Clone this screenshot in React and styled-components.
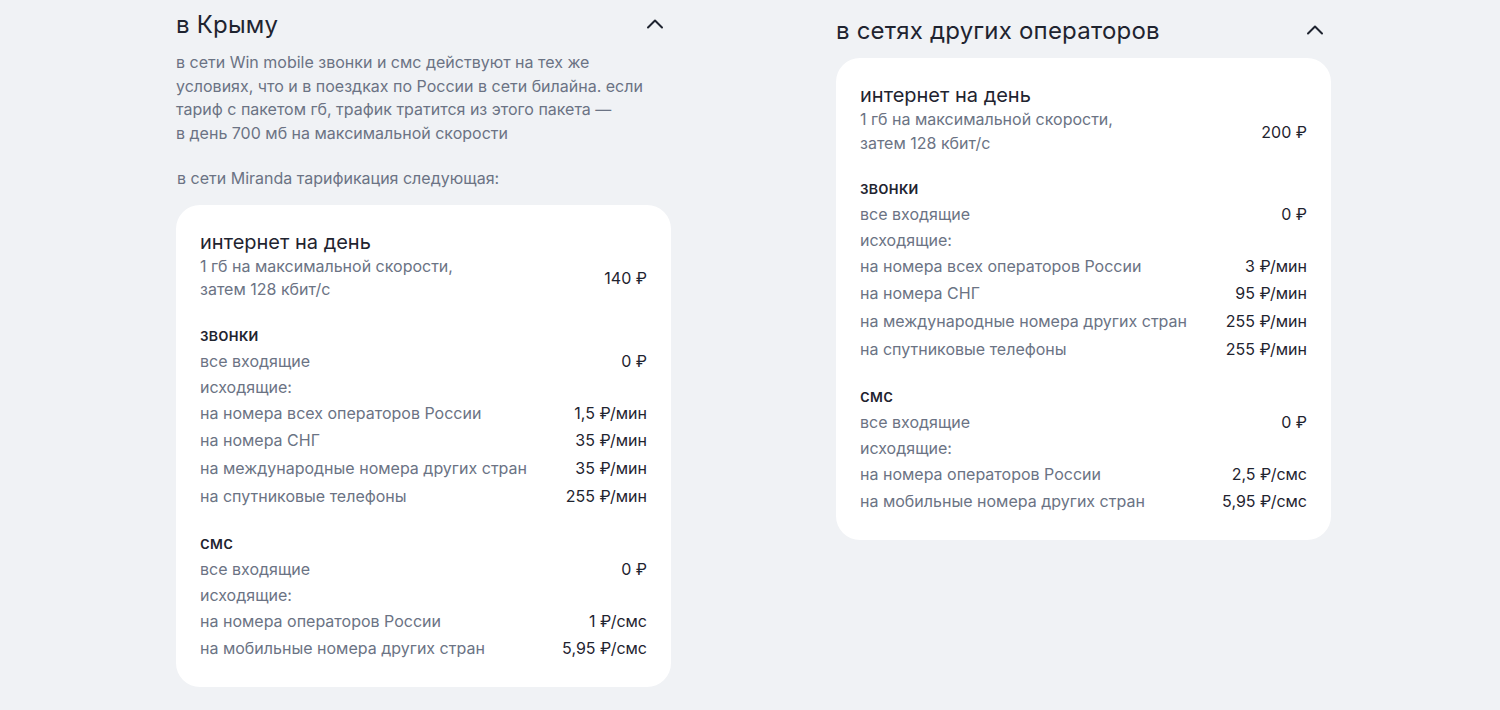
import React from 'react';
import styled, { createGlobalStyle } from 'styled-components';

const Global = createGlobalStyle`
  body { margin: 0; background: #f0f2f5; font-family: Inter, "Noto Sans", sans-serif; color: #1f2430; }
`;

const Page = styled.div`
  display: flex;
  gap: 165px;
  padding: 8px 0 0 176px;
`;

const Column = styled.div`
  width: 495px;
  padding-top: ${({ offset }) => offset || 0}px;
`;

const Header = styled.div`
  display: flex;
  justify-content: space-between;
  align-items: center;
  height: 32px;
  padding-right: 6px;
`;

const Title = styled.h2`
  margin: 0;
  font-size: 24px;
  font-weight: 400;
  letter-spacing: 0.2px;
`;

const Text = styled.p`
  margin: ${({ m }) => m};
  font-size: 16px;
  line-height: 23.5px;
  color: #6b7384;
  padding-left: ${({ indent }) => indent || 0}px;
`;

const Card = styled.div`
  background: #fff;
  border-radius: 24px;
  padding: 24px 24px 25px;
  margin-top: ${({ top }) => top}px;
`;

const CardTitle = styled.div`
  font-size: 20px;
  line-height: 26px;
`;

const Section = styled.div`
  margin-top: ${({ first }) => (first ? 0 : 20)}px;
`;

const SectionTitle = styled.div`
  font-size: 17px;
  font-weight: 500;
  line-height: 26px;
`;

const Row = styled.div`
  display: flex;
  justify-content: space-between;
  align-items: center;
  font-size: 16px;
  line-height: ${({ tight }) => (tight ? 26 : 28)}px;
  color: #6b7384;
`;

const Price = styled.span`
  color: #1f2430;
`;

const Chevron = () => (
  <svg width="20" height="20" viewBox="0 0 20 20" fill="none">
    <path d="M3 13.5 10 6.5l7 7" stroke="#1f2430" strokeWidth="2" strokeLinecap="round" strokeLinejoin="round" />
  </svg>
);

const Tariffs = ({ net, calls, sms }) => (
  <>
    <Section first>
      <CardTitle>интернет на день</CardTitle>
      <Row>
        <Text m="0">1 гб на максимальной скорости,<br />затем 128 кбит/с</Text>
        <Price>{net}</Price>
      </Row>
    </Section>
    <Section>
      <SectionTitle>звонки</SectionTitle>
      <Row tight>все входящие<Price>0 ₽</Price></Row>
      <Row tight>исходящие:</Row>
      <Row tight>на номера всех операторов России<Price>{calls[0]}</Price></Row>
      <Row>на номера СНГ<Price>{calls[1]}</Price></Row>
      <Row>на международные номера других стран<Price>{calls[2]}</Price></Row>
      <Row>на спутниковые телефоны<Price>{calls[3]}</Price></Row>
    </Section>
    <Section>
      <SectionTitle>смс</SectionTitle>
      <Row tight>все входящие<Price>0 ₽</Price></Row>
      <Row tight>исходящие:</Row>
      <Row tight>на номера операторов России<Price>{sms[0]}</Price></Row>
      <Row>на мобильные номера других стран<Price>{sms[1]}</Price></Row>
    </Section>
  </>
);

export default function App() {
  return (
    <Page>
      <Global />
      <Column>
        <Header>
          <Title>в Крыму</Title>
          <Chevron />
        </Header>
        <Text m="11px 0 0">
          в сети Win mobile звонки и смс действуют на тех же<br />
          условиях, что и в поездках по России в сети билайна. если<br />
          тариф с пакетом гб, трафик тратится из этого пакета —<br />
          в день 700 мб на максимальной скорости
        </Text>
        <Text m="22px 0 0" indent={1}>в сети Miranda тарификация следующая:</Text>
        <Card top={14}>
          <Tariffs net="140 ₽" calls={['1,5 ₽/мин', '35 ₽/мин', '35 ₽/мин', '255 ₽/мин']} sms={['1 ₽/смс', '5,95 ₽/смс']} />
        </Card>
      </Column>
      <Column offset={6}>
        <Header>
          <Title>в сетях других операторов</Title>
          <Chevron />
        </Header>
        <Card top={12}>
          <Tariffs net="200 ₽" calls={['3 ₽/мин', '95 ₽/мин', '255 ₽/мин', '255 ₽/мин']} sms={['2,5 ₽/смс', '5,95 ₽/смс']} />
        </Card>
      </Column>
    </Page>
  );
}
